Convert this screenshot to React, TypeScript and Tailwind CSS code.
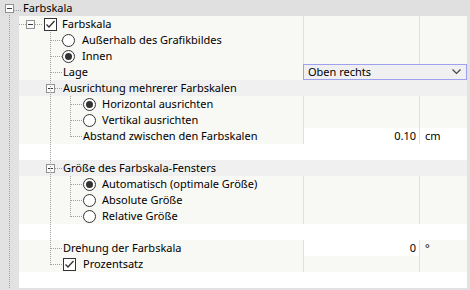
import React from "react";

const FONT = { fontFamily: '"Noto Sans", "DejaVu Sans", sans-serif' };

// toggle box of the tree
function ExpandBox() {
  return (
    <div className="w-[9px] h-[9px] border border-[#919191] bg-[#fbfbfb] flex items-center justify-center shrink-0 mt-[1px]">
      <div className="w-[5px] h-px bg-[#3c3c3c]" />
    </div>
  );
}

function CheckBox() {
  return (
    <div className="w-[13px] h-[13px] border border-[#333] bg-white shrink-0 mt-[1px]">
      <svg width="11" height="11" viewBox="0 0 11 11">
        <polyline points="1.5,5.5 4,8 9.5,2" fill="none" stroke="#333" strokeWidth="1.3" />
      </svg>
    </div>
  );
}

function Radio({ on }: { on?: boolean }) {
  return (
    <div className="w-[13px] h-[13px] rounded-full border border-[#333] bg-white flex items-center justify-center shrink-0">
      {on && <div className="w-[7px] h-[7px] rounded-full bg-[#333]" />}
    </div>
  );
}

type RowProps = {
  children?: React.ReactNode;
  labelBg?: string;
  value?: React.ReactNode;
  valueBg?: string;
  unit?: React.ReactNode;
  unitBg?: string;
};

function Row({ children, labelBg = "bg-[#f8f8f4]", value, valueBg = "bg-[#f8f8f4]", unit, unitBg = "bg-[#f8f8f4]" }: RowProps) {
  return (
    <div className="flex h-4">
      <div className={`w-[284px] flex items-center ${labelBg}`}>{children}</div>
      <div className={`w-[116px] border-l border-[#e0e0e0] flex items-center justify-end pr-[3px] ${valueBg}`}>{value}</div>
      <div className={`w-[48px] border-l border-[#e0e0e0] flex items-center pl-[5px] ${unitBg}`}>{unit}</div>
    </div>
  );
}

function GroupRow({ label }: { label: string }) {
  return (
    <div className="flex h-4 items-center bg-[#f0f0f0] pl-[27px]">
      <ExpandBox />
      <span className="ml-[8px]">{label}</span>
    </div>
  );
}

function BlankRow() {
  return <div className="h-4 bg-white" />;
}

// dotted connector lines, page coordinates
const H: [number, number, number][] = [
  [10, 14, 21],
  [24, 19, 25],
  [24, 35, 42],
  [40, 51, 61],
  [56, 51, 61],
  [72, 51, 61],
  [88, 55, 61],
  [104, 71, 81],
  [120, 71, 81],
  [136, 71, 81],
  [168, 55, 61],
  [184, 71, 81],
  [200, 71, 81],
  [216, 71, 81],
  [248, 51, 61],
  [264, 51, 61],
];
const V: [number, number, number][] = [
  [9, 15, 288],
  [50, 32, 264],
  [70, 96, 136],
  [70, 176, 216],
];

function Connectors() {
  return (
    <svg className="pointer-events-none absolute left-0 top-0" width="470" height="290" shapeRendering="crispEdges">
      {H.map(([y, a, b], i) => (
        <line key={"h" + i} x1={a} x2={b + 1} y1={y + 0.5} y2={y + 0.5} stroke="#a0a0a0" strokeDasharray="1 1" />
      ))}
      {V.map(([x, a, b], i) => (
        <line key={"v" + i} x1={x + 0.5} x2={x + 0.5} y1={a} y2={b + 1} stroke="#a0a0a0" strokeDasharray="1 1" />
      ))}
    </svg>
  );
}

export default function App() {
  return (
    <div className="relative w-[470px] h-[290px] bg-[#e2e2e2] text-[11px] text-black overflow-hidden" style={FONT}>
      {/* Header */}
      <div className="h-4 flex items-center pl-[5px] bg-[#e0e0e0]">
        <ExpandBox />
        <span className="ml-[9px]">Farbskala</span>
      </div>

      <div className="flex">
        <div className="w-[19px] shrink-0" />
        <div className="w-[448px]">
          <Row>
            <div className="flex items-center pl-[7px]">
              <ExpandBox />
              <div className="ml-[9px]"><CheckBox /></div>
              <span className="ml-[5px]">Farbskala</span>
            </div>
          </Row>
          <Row>
            <div className="flex items-center pl-[43px]">
              <Radio />
              <span className="ml-[7px]">Außerhalb des Grafikbildes</span>
            </div>
          </Row>
          <Row>
            <div className="flex items-center pl-[43px]">
              <Radio on />
              <span className="ml-[7px]">Innen</span>
            </div>
          </Row>
          {/* Lage with dropdown */}
          <div className="flex h-4">
            <div className="w-[284px] flex items-center bg-[#f8f8f4] pl-[44px]">Lage</div>
            <div className="w-[164px] flex items-center justify-between border border-[#a0a0f0] bg-[#f0f0f0] pl-[4px] pr-[5px]">
              <span>Oben rechts</span>
              <svg width="9" height="6" viewBox="0 0 9 6">
                <polyline points="0.5,0.5 4.5,4.5 8.5,0.5" fill="none" stroke="#444" strokeWidth="1.2" />
              </svg>
            </div>
          </div>
          <GroupRow label="Ausrichtung mehrerer Farbskalen" />
          <Row>
            <div className="flex items-center pl-[64px]">
              <Radio on />
              <span className="ml-[6px]">Horizontal ausrichten</span>
            </div>
          </Row>
          <Row>
            <div className="flex items-center pl-[64px]">
              <Radio />
              <span className="ml-[6px]">Vertikal ausrichten</span>
            </div>
          </Row>
          <Row value="0.10" valueBg="bg-white" unit="cm" unitBg="bg-white">
            <span className="pl-[64px]">Abstand zwischen den Farbskalen</span>
          </Row>
          <BlankRow />
          <GroupRow label="Größe des Farbskala-Fensters" />
          <Row>
            <div className="flex items-center pl-[64px]">
              <Radio on />
              <span className="ml-[6px]">Automatisch (optimale Größe)</span>
            </div>
          </Row>
          <Row>
            <div className="flex items-center pl-[64px]">
              <Radio />
              <span className="ml-[6px]">Absolute Größe</span>
            </div>
          </Row>
          <Row>
            <div className="flex items-center pl-[64px]">
              <Radio />
              <span className="ml-[6px]">Relative Größe</span>
            </div>
          </Row>
          <BlankRow />
          <Row value="0" valueBg="bg-white" unit="°">
            <span className="pl-[44px]">Drehung der Farbskala</span>
          </Row>
          <Row>
            <div className="flex items-center pl-[44px]">
              <CheckBox />
              <span className="ml-[7px]">Prozentsatz</span>
            </div>
          </Row>
          <BlankRow />
        </div>
      </div>

      <Connectors />
    </div>
  );
}
